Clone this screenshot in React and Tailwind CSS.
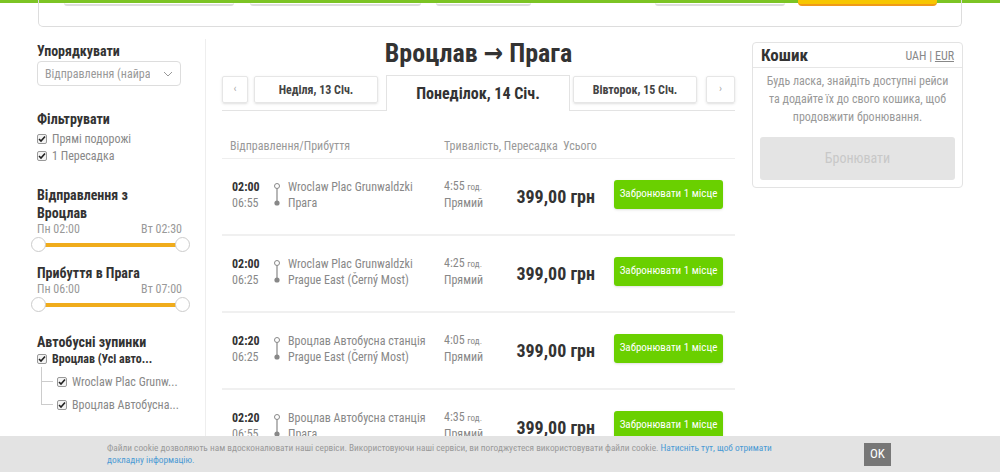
import React from "react";

const font = { fontFamily: '"Liberation Sans Narrow", "Roboto Condensed", "DejaVu Sans Condensed", Roboto, sans-serif' };

function Check({ label, bold }) {
    return (
        <div className="flex items-center gap-[5px] h-[17px]">
            <span className="w-[10px] h-[10px] rounded-[2px] border border-[#999] bg-[#f3f3f3] flex items-center justify-center">
                <svg width="8" height="8" viewBox="0 0 8 8"><path d="M1 4 L3 6 L7 1.5" stroke="#222" strokeWidth="1.6" fill="none" /></svg>
            </span>
            <span className={bold ? "text-[12px] font-bold text-[#333]" : "text-[12px] text-[#888]"}>{label}</span>
        </div>
    );
}

function Slider({ from, to }) {
    return (
        <div className="w-[145px]">
            <div className="flex justify-between text-[12px] text-[#999] leading-[14px]">
                <span>{from}</span>
                <span>{to}</span>
            </div>
            <div className="relative h-[16px] mt-[1px] -ml-[6px] -mr-[8px]">
                <div className="absolute left-[7px] right-[7px] top-[6px] h-[4px] bg-[#f0ac1c]" />
                <div className="absolute left-0 top-0 w-[15px] h-[15px] rounded-full bg-white border border-[#ccc]" />
                <div className="absolute right-0 top-0 w-[15px] h-[15px] rounded-full bg-white border border-[#ccc]" />
            </div>
        </div>
    );
}

function RouteIcon() {
    return (
        <svg width="8" height="26" viewBox="0 0 8 26" className="mx-[7px]">
            <circle cx="4" cy="4" r="2.5" fill="white" stroke="#888" strokeWidth="1" />
            <line x1="4" y1="6.5" x2="4" y2="19" stroke="#888" strokeWidth="1.2" />
            <circle cx="4" cy="21" r="2.6" fill="#888" />
        </svg>
    );
}

const rows = [
    { dep: "02:00", arr: "06:55", from: "Wroclaw Plac Grunwaldzki", to: "Прага", dur: "4:55" },
    { dep: "02:00", arr: "06:25", from: "Wroclaw Plac Grunwaldzki", to: "Prague East (Černý Most)", dur: "4:25" },
    { dep: "02:20", arr: "06:25", from: "Вроцлав Автобусна станція", to: "Prague East (Černý Most)", dur: "4:05" },
    { dep: "02:20", arr: "06:55", from: "Вроцлав Автобусна станція", to: "Прага", dur: "4:35" },
];

export default function App() {
    return (
        <div className="relative h-[472px] overflow-hidden bg-white text-[#333]" style={font}>
            {/* top search strip */}
            <div className="h-[3px] bg-[#7cc424]" />
            <div className="mx-[38px] h-[27px] -mt-[3px] border border-t-0 border-[#ddd] rounded-b-[5px] relative">
                <div className="flex items-start pt-[3px] pl-[25px]">
                    <div className="w-[170px] h-[3px] border-b-2 border-[#ddd] rounded-b" />
                    <div className="w-[171px] h-[3px] ml-[16px] border-b-2 border-[#ddd] rounded-b" />
                    <div className="w-[95px] h-[3px] ml-[15px] border-b-2 border-[#ddd] rounded-b" />
                    <div className="w-[130px] h-[3px] ml-[124px] border-b-2 border-[#ddd] rounded-b" />
                    <div className="w-[139px] h-[6px] ml-[13px] -mt-[3px] bg-[#f7c600] border-b-2 border-[#f09a18] rounded-b" />
                </div>
            </div>

            <div className="flex pl-[37px] mt-[15px]">
                {/* sidebar */}
                <aside className="w-[169px] pr-[16px] border-r border-[#eee] h-[420px] shrink-0 -mt-[3px] pt-[3px]">
                    <div className="text-[14px] font-bold leading-[18px]">Упорядкувати</div>
                    <div className="mt-[1px] w-[144px] h-[25px] border border-[#ddd] rounded-[4px] flex items-center justify-between px-[7px] text-[12px] text-[#999]">
                        <span className="whitespace-nowrap overflow-hidden">Відправлення (найра</span>
                        <svg width="10" height="6" viewBox="0 0 10 6"><path d="M1 1 L5 5 L9 1" stroke="#999" fill="none" strokeWidth="1" /></svg>
                    </div>
                    <div className="text-[14px] font-bold leading-[18px] mt-[24px]">Фільтрувати</div>
                    <div className="mt-[2px]">
                        <Check label="Прямі подорожі" />
                        <Check label="1 Пересадка" />
                    </div>

                    <div className="text-[14px] font-bold leading-[18px] mt-[22px]">Відправлення з<br />Вроцлав</div>
                    <Slider from="Пн 02:00" to="Вт 02:30" />
                    <div className="text-[14px] font-bold leading-[18px] mt-[11px]">Прибуття в Прага</div>
                    <Slider from="Пн 06:00" to="Вт 07:00" />

                    <div className="text-[14px] font-bold leading-[18px] mt-[20px]">Автобусні зупинки</div>
                    <div className="-mt-[1px]"><Check label="Вроцлав (Усі авто..." bold /></div>
                    <div className="relative ml-[3px] pl-[17px] mt-[3px]">
                        <div className="absolute left-[1px] top-[-3px] h-[37px] w-px bg-[#ccc]" />
                        <div className="absolute left-[1px] top-[11px] w-[12px] h-px bg-[#ccc]" />
                        <div className="absolute left-[1px] top-[34px] w-[12px] h-px bg-[#ccc]" />
                        <div className="h-[23px] flex items-center"><Check label="Wroclaw Plac Grunw..." /></div>
                        <div className="h-[23px] flex items-center"><Check label="Вроцлав Автобусна..." /></div>
                    </div>
                </aside>

                {/* results */}
                <main className="w-[513px] ml-[16px] shrink-0">
                    <h1 className="text-center text-[26px] font-bold leading-[22px] text-[#333]">Вроцлав → Прага</h1>
                    <div className="mt-[11px] flex items-end border-b border-[#e3e3e3] h-[36px]">
                        <div className="w-[26px] h-[27px] mb-[7px] border border-[#e6e6e6] rounded-[2px] flex items-center justify-center text-[11px] text-[#aaa] shadow-sm">‹</div>
                        <div className="w-[124px] h-[27px] mb-[7px] ml-[6px] border border-[#e6e6e6] rounded-[2px] flex items-center justify-center text-[12px] font-bold text-[#444] shadow-sm">Неділя, 13 Січ.</div>
                        <div className="w-[184px] h-[36px] -mb-px ml-[8px] border border-b-0 border-[#e3e3e3] bg-white flex items-center justify-center text-[16px] font-bold text-[#333]">Понеділок, 14 Січ.</div>
                        <div className="w-[124px] h-[27px] mb-[7px] ml-[3px] border border-[#e6e6e6] rounded-[2px] flex items-center justify-center text-[12px] font-bold text-[#444] shadow-sm">Вівторок, 15 Січ.</div>
                        <div className="w-[29px] h-[27px] mb-[7px] ml-[9px] border border-[#e6e6e6] rounded-[2px] flex items-center justify-center text-[11px] text-[#aaa] shadow-sm">›</div>
                    </div>

                    <div className="mt-[26px] flex text-[12px] text-[#999] h-[22px] border-b border-[#eee] pl-[8px]">
                        <span className="w-[214px]">Відправлення/Прибуття</span>
                        <span className="w-[119px]">Тривалість, Пересадка</span>
                        <span>Усього</span>
                    </div>

                    {rows.map((r, i) => (
                        <div key={i} className="h-[77px] border-b-2 border-[#f0f0f0] flex items-center pl-[10px] pb-[4px]">
                            <div className="w-[34px] text-[12px] leading-[16px]">
                                <div className="font-bold text-[#333]">{r.dep}</div>
                                <div className="text-[#888]">{r.arr}</div>
                            </div>
                            <RouteIcon />
                            <div className="w-[156px] text-[12px] leading-[16px] text-[#888] whitespace-nowrap">
                                <div>{r.from}</div>
                                <div>{r.to}</div>
                            </div>
                            <div className="w-[60px] text-[12px] leading-[16px] text-[#888]">
                                <div>{r.dur} <span className="text-[9px]">год.</span></div>
                                <div>Прямий</div>
                            </div>
                            <div className="w-[91px] text-right text-[18px] font-bold text-[#333] pt-[4px]">399,00 грн</div>
                            <button className="ml-[19px] w-[109px] h-[29px] rounded-[3px] bg-[#6ad000] text-white text-[11px] shadow-sm">Забронювати 1 місце</button>
                        </div>
                    ))}
                </main>

                {/* cart */}
                <div className="w-[211px] ml-[17px] shrink-0">
                    <div className="border border-[#e3e3e3] rounded-[4px] h-[146px]">
                        <div className="flex items-end justify-between px-[8px] h-[25px] border-b border-[#e6e6e6] pb-[2px]">
                            <span className="text-[17px] font-bold leading-[20px]">Кошик</span>
                            <span className="text-[12px] text-[#888]">UAH | <span className="underline">EUR</span></span>
                        </div>
                        <p className="text-center text-[12px] leading-[18px] text-[#999] mt-[4px] px-[10px]">Будь ласка, знайдіть доступні рейси та додайте їх до свого кошика, щоб продовжити бронювання.</p>
                        <div className="mx-[7px] mt-[11px] h-[43px] rounded-[3px] bg-[#e4e4e4] flex items-center justify-center text-[14px] text-[#c8c8c8]">Бронювати</div>
                    </div>
                </div>
            </div>

            {/* cookie bar */}
            <div className="absolute left-0 right-0 bottom-0 h-[36px] bg-[#e3e3e3] flex items-center">
                <p className="ml-[107px] w-[680px] text-[9.3px] leading-[12px] text-[#999]">
                    Файли cookie дозволяють нам вдосконалювати наші сервіси. Використовуючи наші сервіси, ви погоджуєтеся використовувати файли cookie. <span className="text-[#4a9ad4]">Натисніть тут, щоб отримати докладну інформацію.</span>
                </p>
                <div className="ml-[77px] w-[27px] h-[23px] bg-[#777] text-white text-[13px] flex items-center justify-center">OK</div>
            </div>
        </div>
    );
}
